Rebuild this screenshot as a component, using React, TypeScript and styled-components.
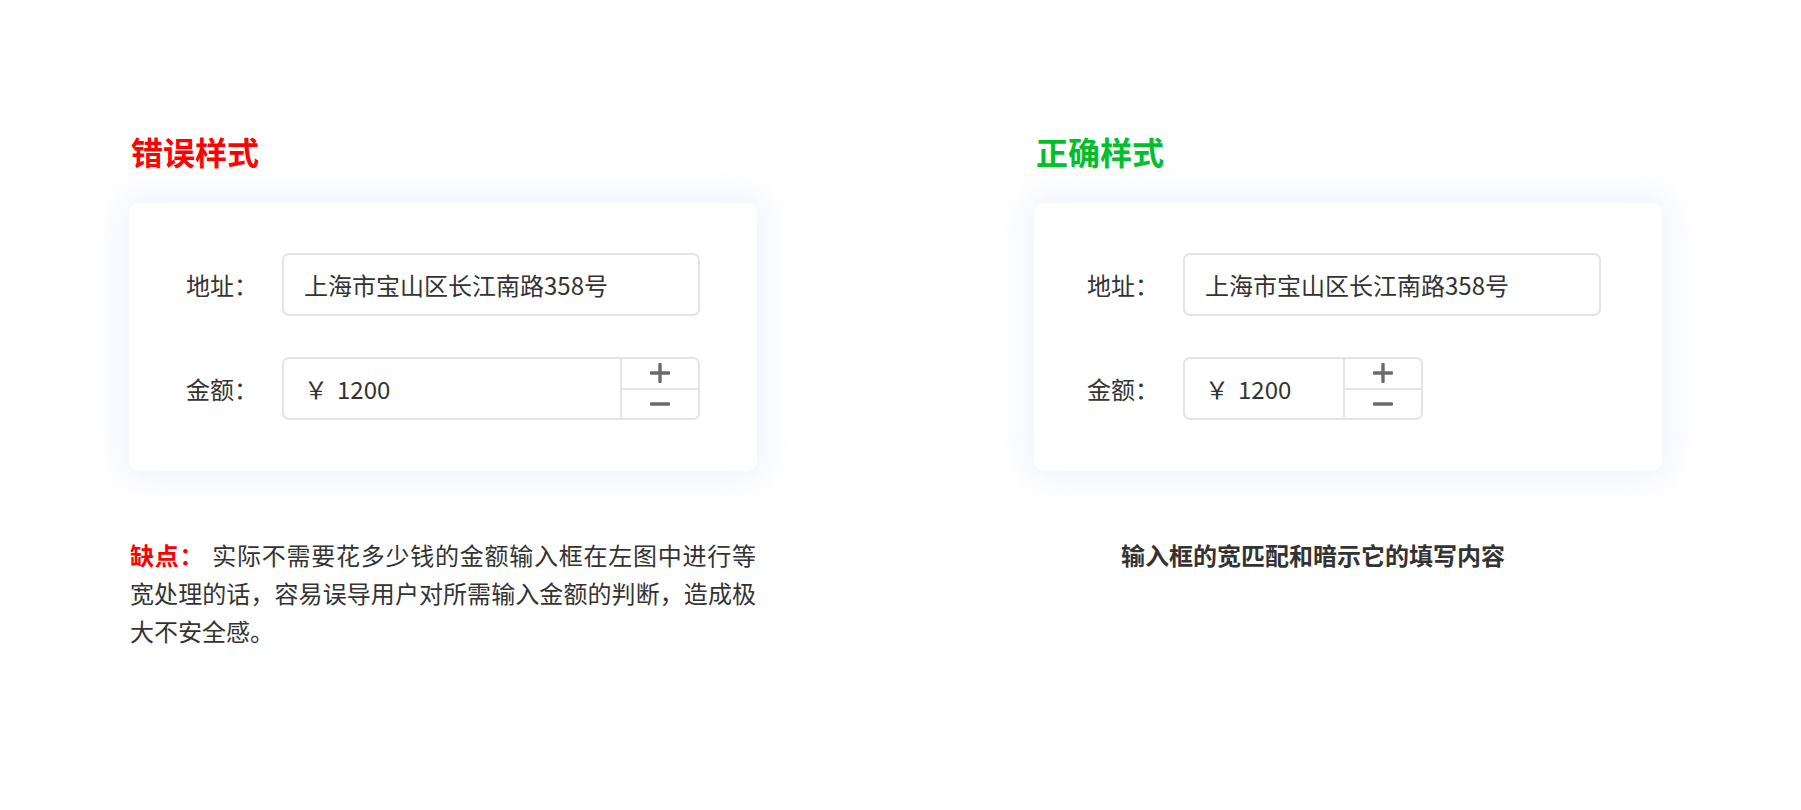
import React from "react";
import styled, { createGlobalStyle } from "styled-components";

const GlobalStyle = createGlobalStyle`
  html, body {
    margin: 0;
    padding: 0;
    background: #ffffff;
  }
  body {
    font-family: "Noto Sans CJK SC", "Noto Sans", sans-serif;
    color: #333333;
  }
`;

const Page = styled.div`
  display: flex;
  gap: 277px;
  padding: 135px 0 0 129px;
  width: 1801px;
  height: 810px;
  box-sizing: border-box;
`;

const Column = styled.section`
  display: flex;
  flex-direction: column;
  width: 628px;
`;

const Heading = styled.h2<{ $tone: "bad" | "good" }>`
  margin: 0 0 36px 2px;
  font-size: 32px;
  line-height: 32px;
  font-weight: 700;
  color: ${(p) => (p.$tone === "bad" ? "#ff0000" : "#00bf2a")};
`;

const Card = styled.div<{ $shift?: number }>`
  display: flex;
  flex-direction: column;
  gap: 41px;
  padding: 50px 0 51px ${(p) => 57 - (p.$shift ?? 0)}px;
  background: #ffffff;
  border-radius: 10px;
  box-shadow: 0 0 34px 10px rgba(226, 231, 250, 0.45);
`;

const Row = styled.div`
  display: flex;
  align-items: center;
`;

const Label = styled.span`
  width: 96px;
  font-size: 24px;
  color: #333333;
  flex-shrink: 0;
`;

const Field = styled.div<{ $width: number }>`
  display: flex;
  align-items: stretch;
  width: ${(p) => p.$width}px;
  height: 63px;
  box-sizing: border-box;
  border: 2px solid #e4e4e4;
  border-radius: 7px;
  overflow: hidden;
`;

const FieldText = styled.div`
  flex: 1;
  display: flex;
  align-items: center;
  padding-left: 20px;
  font-size: 24px;
  color: #333333;
  white-space: nowrap;
`;

const Currency = styled.span`
  margin-right: 9px;
`;

const Stepper = styled.div`
  display: flex;
  flex-direction: column;
  width: 78px;
  box-sizing: border-box;
  border-left: 2px solid #e4e4e4;
`;

const StepButton = styled.button<{ $top?: boolean }>`
  flex: 1;
  display: flex;
  align-items: center;
  justify-content: center;
  padding: 0;
  margin: 0;
  background: #ffffff;
  border: none;
  border-bottom: ${(p) => (p.$top ? "2px solid #e4e4e4" : "none")};
  cursor: pointer;
`;

const Sign = ({ plus }: { plus?: boolean }) => (
  <svg width="20" height="20" viewBox="0 0 20 20">
    <rect x="0" y="8.3" width="20" height="3.4" rx="1" fill="#6b6b6b" />
    {plus && <rect x="8.3" y="0" width="3.4" height="20" rx="1" fill="#6b6b6b" />}
  </svg>
);

const Note = styled.p`
  margin: 65px 0 0 1px;
  width: 626px;
  font-size: 24px;
  line-height: 38px;
  text-align: justify;
  color: #333333;
`;

const NoteTag = styled.span`
  color: #ff0000;
  font-weight: 700;
  padding-right: 8px;
`;

const Caption = styled.p`
  margin: 65px 0 0 87px;
  font-size: 24px;
  line-height: 38px;
  font-weight: 700;
  color: #333333;
`;

type FormProps = { amountWidth: number; shift?: number };

const DemoForm = ({ amountWidth, shift }: FormProps) => (
  <Card $shift={shift}>
    <Row>
      <Label>地址：</Label>
      <Field $width={418}>
        <FieldText>上海市宝山区长江南路358号</FieldText>
      </Field>
    </Row>
    <Row>
      <Label>金额：</Label>
      <Field $width={amountWidth}>
        <FieldText>
          <Currency>￥</Currency>1200
        </FieldText>
        <Stepper>
          <StepButton $top aria-label="增加">
            <Sign plus />
          </StepButton>
          <StepButton aria-label="减少">
            <Sign />
          </StepButton>
        </Stepper>
      </Field>
    </Row>
  </Card>
);

export default function App() {
  return (
    <>
      <GlobalStyle />
      <Page>
        <Column>
          <Heading $tone="bad">错误样式</Heading>
          <DemoForm amountWidth={418} />
          <Note>
            <NoteTag>缺点：</NoteTag>
            实际不需要花多少钱的金额输入框在左图中进行等宽处理的话，容易误导用户对所需输入金额的判断，造成极大不安全感。
          </Note>
        </Column>
        <Column>
          <Heading $tone="good">正确样式</Heading>
          <DemoForm amountWidth={240} shift={4} />
          <Caption>输入框的宽匹配和暗示它的填写内容</Caption>
        </Column>
      </Page>
    </>
  );
}
